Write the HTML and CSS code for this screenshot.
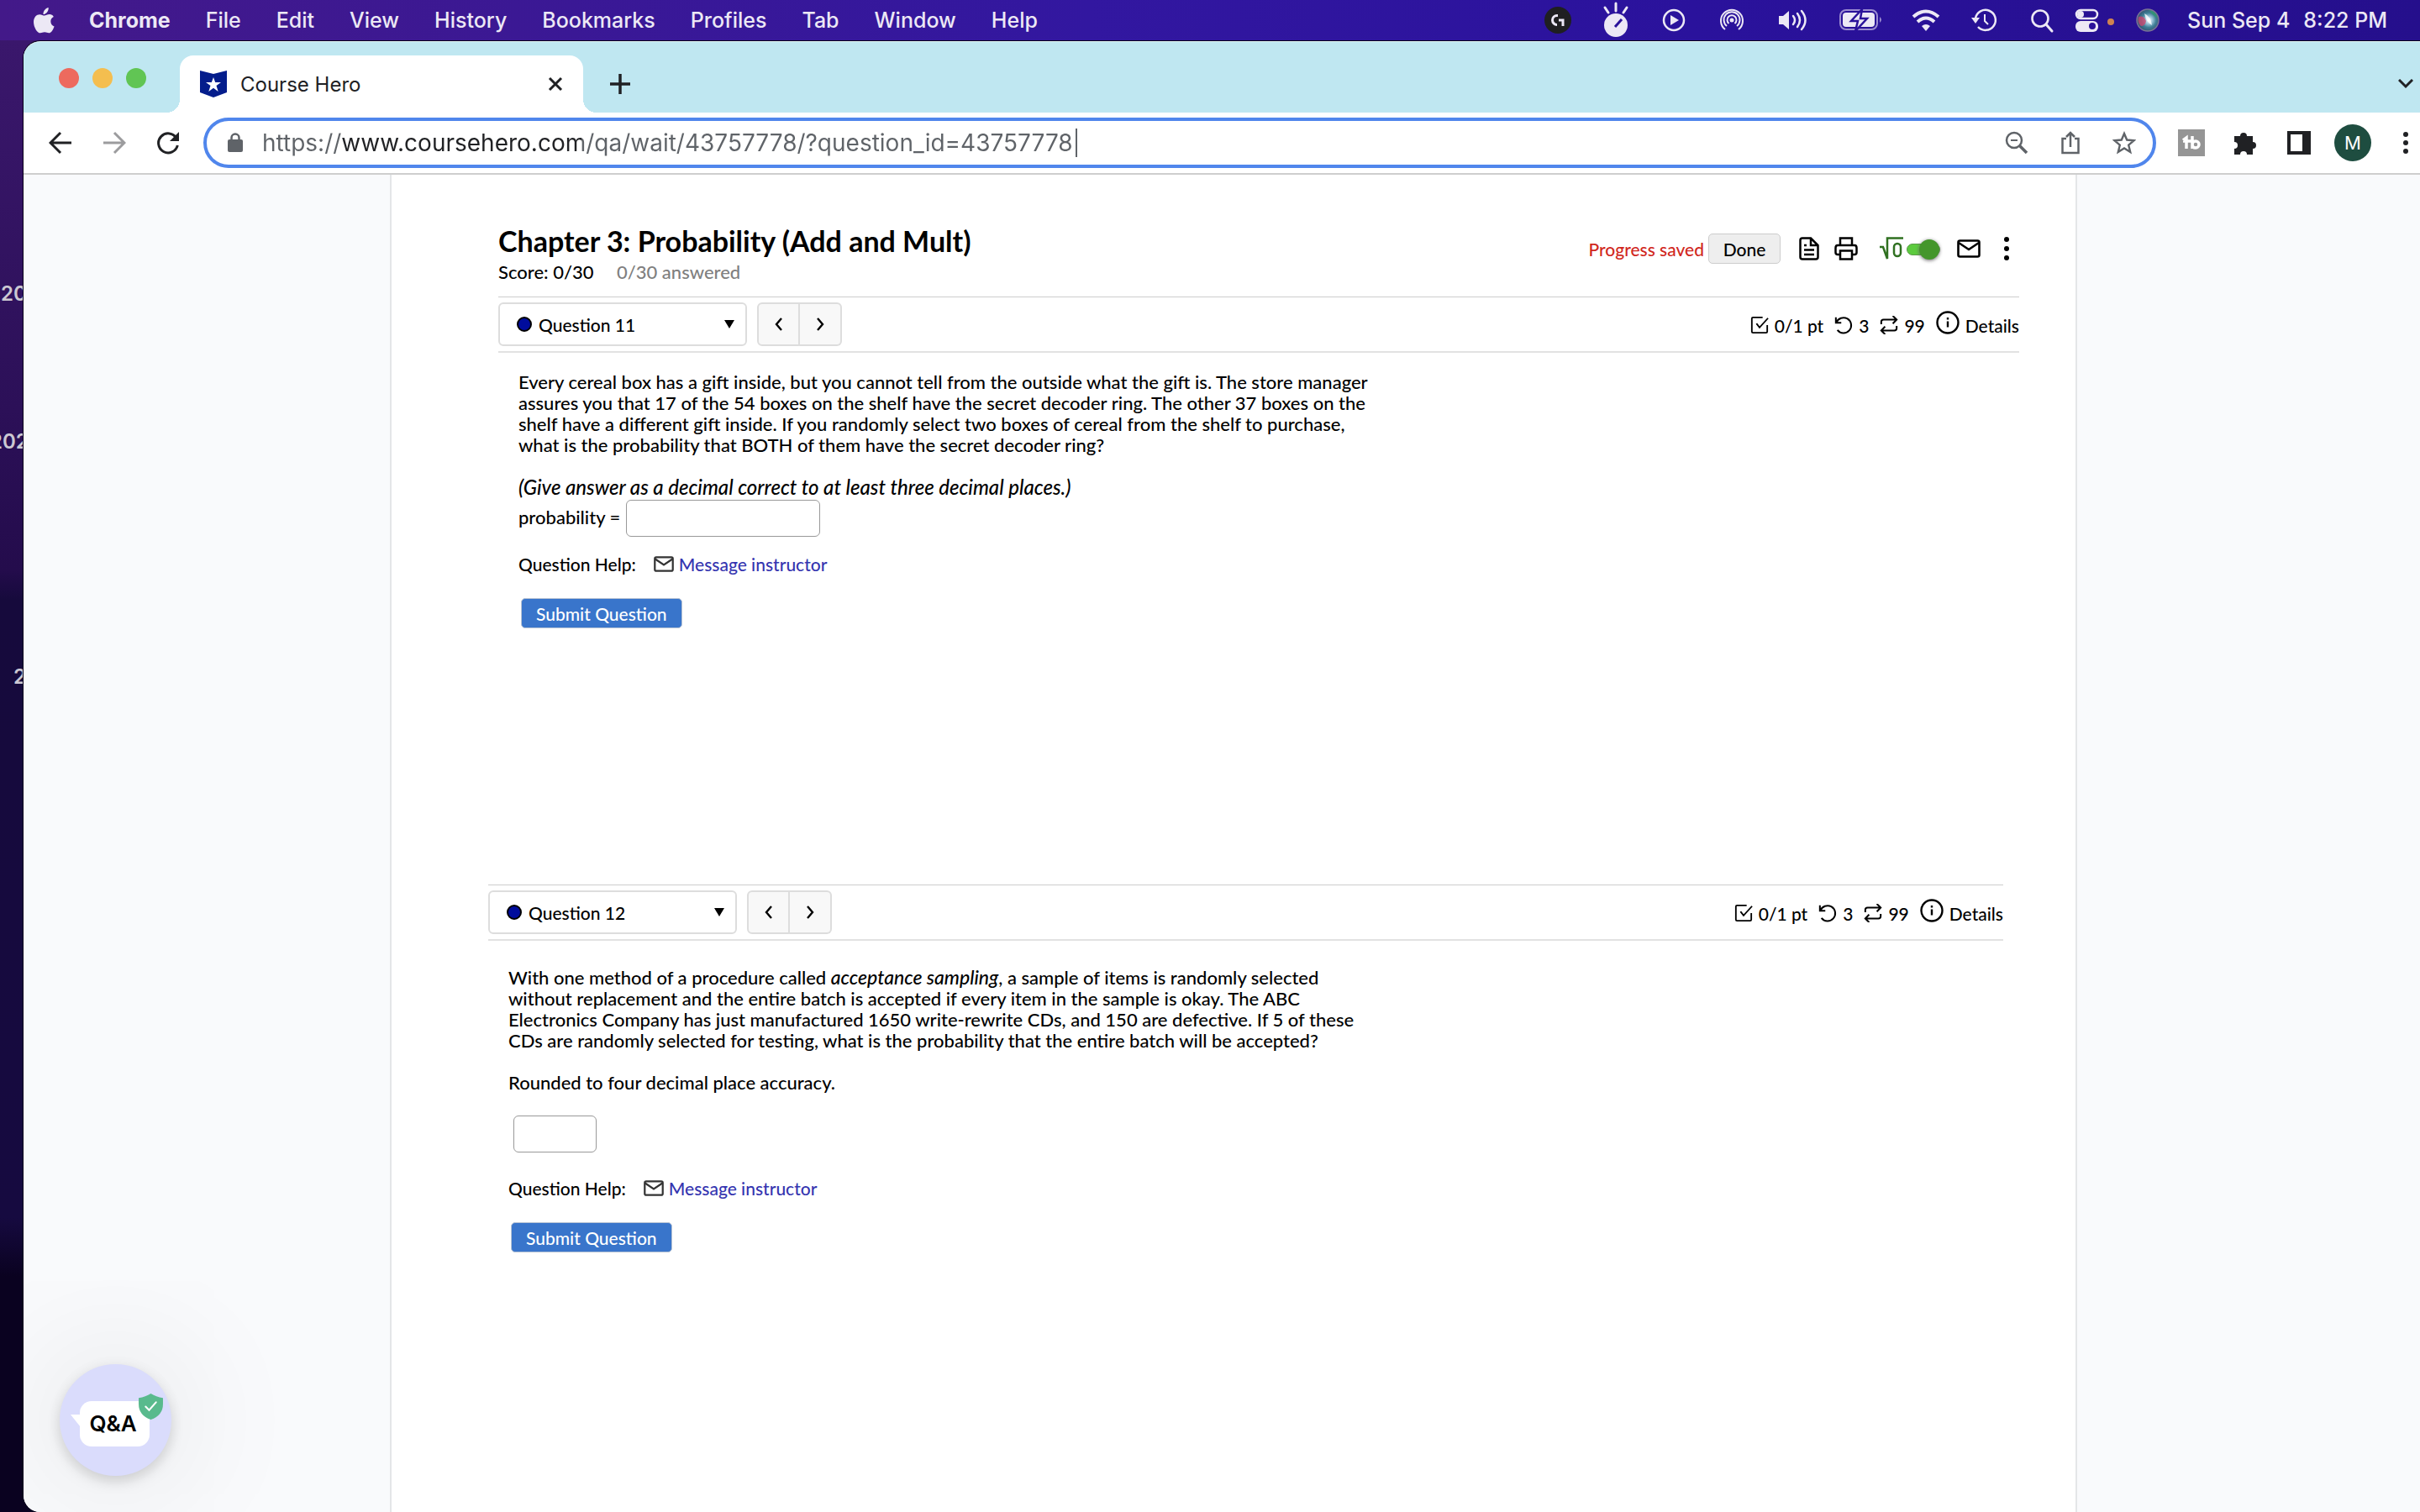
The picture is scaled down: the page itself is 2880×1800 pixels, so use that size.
FILE: index.html
```html
<!DOCTYPE html>
<html lang="en">
<head>
    <meta charset="UTF-8">
    <meta name="viewport" content="width=device-width, initial-scale=1.0">
    <title>Course Hero</title>
    <link rel="stylesheet" href="styles.css">
</head>
<body>

    <!-- Icons used more than once -->
    <svg class="sprite" aria-hidden="true">
        <symbol id="mail" viewBox="0 0 28 22">
            <rect x="1.5" y="1.5" width="25" height="19" rx="2" fill="none" stroke="currentColor" stroke-width="2.6"/>
            <path d="M2 4l12 8 12-8" fill="none" stroke="currentColor" stroke-width="2.6"/>
        </symbol>
        <symbol id="check" viewBox="0 0 24 24">
            <path d="M16 2H3.500Q2 2 2 3.500V20.500Q2 22 3.500 22H20.500Q22 22 22 20.500V12" fill="none" stroke="currentColor" stroke-width="2"/>
            <path d="M8 10l4 5L23 3" fill="none" stroke="currentColor" stroke-width="2"/>
        </symbol>
        <symbol id="undo" viewBox="0 0 24 24">
            <path d="M2 2v7h7M2.500 9A10 10 0 1 1 4 18.500" fill="none" stroke="currentColor" stroke-width="2.2"/>
        </symbol>
        <symbol id="repeat" viewBox="0 0 24 24">
            <path d="M17 0l5 5-5 5M2 11V8q0-3 3-3h17M7 24l-5-5 5-5M22 13v3q0 3-3 3H2" fill="none" stroke="currentColor" stroke-width="2.2"/>
        </symbol>
        <symbol id="info" viewBox="0 0 28 28">
            <circle cx="14" cy="14" r="12.500" fill="none" stroke="currentColor" stroke-width="2.4"/>
            <path d="M14 12.500v7M14 8v2.600" stroke="currentColor" stroke-width="2.4"/>
        </symbol>
        <symbol id="caret" viewBox="0 0 12 12"><path d="M0 1h12L6 11z"/></symbol>
        <symbol id="prev" viewBox="0 0 10 16"><path d="M8 1L2 8l6 7" fill="none" stroke="currentColor" stroke-width="2.4"/></symbol>
        <symbol id="next" viewBox="0 0 10 16"><path d="M2 1l6 7-6 7" fill="none" stroke="currentColor" stroke-width="2.4"/></symbol>
    </svg>

    <header class="menubar">
        <svg class="apple" viewBox="0 0 26 32"><path d="M18 1c.3 2.300-.6 4.300-1.900 5.700C14.800 8.100 13 8.900 12 8.700c-.2-2 .8-4.200 2-5.400C15.200 2 16.800 1.200 18 1zM24 11.600c-2.300 1.300-3.400 3-3.400 5.300 0 2.700 1.500 4.800 4.100 5.800-.8 2.600-3.300 7.700-6.200 7.700-1.800 0-2.500-1-4.900-1s-3.200 1-4.900 1C5 30.400.9 23.500.9 17.600c0-5.500 3.400-8.700 7-8.700 2.200 0 4 1.300 5.500 1.300 1.400 0 3.300-1.400 6-1.400 1.800 0 3.500.9 4.600 2.800z" fill="currentColor"/></svg>
        <nav class="menus">
            <b>Chrome</b>
            <span>File</span>
            <span>Edit</span>
            <span>View</span>
            <span>History</span>
            <span>Bookmarks</span>
            <span>Profiles</span>
            <span>Tab</span>
            <span>Window</span>
            <span>Help</span>
        </nav>
        <div class="status">
            <svg class="status-icon" viewBox="0 0 36 36"><circle cx="18" cy="18" r="16" fill="#1f1f21"/><path d="M18 12.500h-1a5.500 5.500 0 0 0 0 11M19 18h5v7" fill="none" stroke="currentColor" stroke-width="3"/></svg>
            <svg class="status-icon tall" viewBox="0 0 36 44"><circle cx="18" cy="28" r="14" fill="currentColor"/><path d="M18 2v9M5 7l4 6M31 7l-4 6" stroke="currentColor" stroke-width="3" stroke-linecap="round"/><path d="M17 30l8-9" stroke="#2a129a" stroke-width="3"/></svg>
            <svg class="status-icon" viewBox="0 0 36 36"><circle cx="18" cy="18" r="12" fill="none" stroke="currentColor" stroke-width="2.500"/><path d="M14 12l10 6-10 6z" fill="currentColor"/></svg>
            <svg class="status-icon" viewBox="0 0 36 36"><g fill="none" stroke="currentColor" stroke-width="2"><path d="M10 29a13 13 0 1 1 16 0M12 25a9.500 9.500 0 1 1 12 0M14.500 22a5.500 5.500 0 1 1 7 0"/></g><circle cx="18" cy="18" r="2.500" fill="currentColor"/></svg>
            <svg class="status-icon wide" viewBox="0 0 44 36"><path d="M5 13h5l7-6v22l-7-6H5z" fill="currentColor"/><path d="M22 13q4 5 0 10M27 10q6 8 0 16M32 7q9 11 0 22" fill="none" stroke="currentColor" stroke-width="2.500" stroke-linecap="round"/></svg>
            <svg class="battery" viewBox="0 0 52 28"><rect x="1" y="2" width="44" height="23" rx="7" fill="none" stroke="#9a8bd0" stroke-width="2"/><rect x="4" y="5" width="38" height="17" rx="4" fill="currentColor"/><path d="M48 10q4 3.500 0 7z" fill="#9a8bd0"/><path d="M27 1L14 15h8l-3 12 14-15h-8z" fill="currentColor" stroke="#2a129a" stroke-width="2.500"/></svg>
            <svg class="status-icon" viewBox="0 0 36 36"><path d="M3 14q15-13 30 0M8 20q10-9 20 0" fill="none" stroke="currentColor" stroke-width="4"/><path d="M13 25q5-4 10 0l-5 6z" fill="currentColor"/></svg>
            <svg class="status-icon" viewBox="0 0 36 36"><path d="M8 16A12 12 0 1 1 11 26" fill="none" stroke="currentColor" stroke-width="2.500"/><path d="M3 15h10l-5 7z" fill="currentColor"/><path d="M19 11v8l4 4" fill="none" stroke="currentColor" stroke-width="2"/></svg>
            <svg class="status-icon" viewBox="0 0 36 36"><circle cx="16" cy="16" r="9.500" fill="none" stroke="currentColor" stroke-width="2.600"/><path d="M23 23l7 8" stroke="currentColor" stroke-width="3" stroke-linecap="round"/></svg>
            <svg class="control-center" viewBox="0 0 48 30"><rect x="2" y="3" width="25" height="10" rx="5" fill="none" stroke="currentColor" stroke-width="2.500"/><circle cx="7" cy="8" r="4" fill="currentColor"/><rect x="1" y="16" width="27" height="13" rx="6" fill="currentColor"/><circle cx="21" cy="22" r="4" fill="#2a129a"/><circle cx="43" cy="17" r="4" fill="#cf8350"/></svg>
            <svg class="status-icon" viewBox="0 0 36 36">
                <defs><radialGradient id="siri" cx=".55" cy=".5" r=".55"><stop offset="0" stop-color="#fff"/><stop offset=".3" stop-color="#9cc4d8"/><stop offset=".6" stop-color="#3f7f96"/><stop offset="1" stop-color="#2f4f6c"/></radialGradient></defs>
                <circle cx="18" cy="18" r="13" fill="url(#siri)"/><path d="M7 14q6-2 9 5-1 6-6 6-5-4-3-11z" fill="#c8466e" opacity=".8"/><path d="M19 6q10 1 11 10-6-4-11-10z" fill="#2f9a70" opacity=".8"/><circle cx="18" cy="18" r="13" fill="none" stroke="#7a7396" stroke-width="1.500"/><path d="M14 10q8 4 9 14-7-4-9-14z" fill="#fff" opacity=".8"/>
            </svg>
            <time class="clock"><span>Sun Sep 4</span><span>8:22 PM</span></time>
        </div>
    </header>

    <div class="desktop">
        <span class="desk-label first">20</span>
        <span class="desk-label second">202</span>
        <span class="desk-label third">2</span>

        <div class="browser">
            <div class="tabstrip">
                <div class="lights"><i class="red"></i><i class="yellow"></i><i class="green"></i></div>
                <div class="tab">
                    <svg class="favicon" viewBox="0 0 32 32"><path d="M0 0l16 4L32 0v26l-16 6-16-6z" fill="#041d8c"/><path d="M16 8l2.200 6H25l-5.500 4 2.200 7-5.700-4.300L10.300 25l2.200-7L7 14h6.800z" fill="#fff"/></svg>
                    <span class="tab-title">Course Hero</span>
                    <button class="icon-btn" aria-label="Close tab"><svg width="18" height="18" viewBox="0 0 18 18"><path d="M2 2l14 14M16 2L2 16" stroke="currentColor" stroke-width="3"/></svg></button>
                </div>
                <button class="icon-btn new-tab" aria-label="New tab"><svg width="24" height="24" viewBox="0 0 24 24"><path d="M12 0v24M0 12h24" stroke="currentColor" stroke-width="3.500"/></svg></button>
                <button class="icon-btn tab-search" aria-label="Search tabs"><svg width="18" height="12" viewBox="0 0 18 12"><path d="M1 1l8 8 8-8" fill="none" stroke="currentColor" stroke-width="3"/></svg></button>
            </div>

            <div class="toolbar">
                <div class="nav">
                    <button class="icon-btn" aria-label="Back"><svg width="28" height="28" viewBox="0 0 28 28"><path d="M27 14H3M14 2L2 14l12 12" fill="none" stroke="currentColor" stroke-width="3"/></svg></button>
                    <button class="icon-btn" aria-label="Forward" disabled><svg width="28" height="28" viewBox="0 0 28 28"><path d="M1 14h24M14 2l12 12-12 12" fill="none" stroke="currentColor" stroke-width="3"/></svg></button>
                    <button class="icon-btn" aria-label="Reload"><svg width="28" height="28" viewBox="0 0 28 28"><path d="M24 8.500A11.500 11.500 0 1 0 25.300 17" fill="none" stroke="currentColor" stroke-width="3"/><path d="M27 1v11H16z" fill="currentColor"/></svg></button>
                </div>
                <div class="omnibox">
                    <svg class="lock" viewBox="0 0 18 24"><rect x="0" y="8" width="18" height="15" rx="2" fill="currentColor"/><path d="M4.500 9V6a4.500 4.500 0 0 1 9 0v3" fill="none" stroke="currentColor" stroke-width="2.500"/></svg>
                    <input class="url" type="text" aria-label="Address" value="https://www.coursehero.com/qa/wait/43757778/?question_id=43757778">
                    <i class="text-caret"></i>
                    <div class="omni-actions">
                        <button class="icon-btn" aria-label="Zoom"><svg width="28" height="28" viewBox="0 0 28 28"><circle cx="11" cy="11" r="9" fill="none" stroke="currentColor" stroke-width="2.500"/><path d="M17.500 17.500L26 26" stroke="currentColor" stroke-width="3.500"/><path d="M7 11h8" stroke="currentColor" stroke-width="2.200"/></svg></button>
                        <button class="icon-btn" aria-label="Share"><svg width="28" height="28" viewBox="0 0 28 28"><path d="M9 9H4.500v17h19V9H19M14 19V2M9 7l5-5 5 5" fill="none" stroke="currentColor" stroke-width="2.500"/></svg></button>
                        <button class="icon-btn" aria-label="Bookmark"><svg width="28" height="28" viewBox="0 0 28 28"><path d="M14 3l3.200 7.500 8.300.8-6.300 5.400 2 8.300-7.200-4.500L6.800 25l2-8.300-6.300-5.400 8.300-.8z" fill="none" stroke="currentColor" stroke-width="2.400"/></svg></button>
                    </div>
                </div>
                <div class="extensions">
                    <button class="icon-btn" aria-label="Extension"><svg width="32" height="32" viewBox="0 0 32 32"><rect width="32" height="32" fill="#959595"/><path d="M6 13l4-3v13M6 14h10M17 8v15M17 18a4 4 0 1 1 4 4q-4 0-4-4" fill="none" stroke="#fff" stroke-width="3.500"/></svg></button>
                    <button class="icon-btn" aria-label="Extensions"><svg width="30" height="30" viewBox="0 0 30 30"><path d="M2 7h7a4 4 0 1 1 8 0h7v7a4 4 0 1 1 0 8v7h-7a4 4 0 0 0-8 0H2v-7a4 4 0 0 0 0-8z" fill="currentColor"/></svg></button>
                    <button class="icon-btn" aria-label="Side panel"><svg width="28" height="28" viewBox="0 0 28 28"><path d="M2 2h24v24H2z" fill="none" stroke="currentColor" stroke-width="4"/><path d="M18 0h10v28H18z" fill="currentColor"/></svg></button>
                    <button class="avatar">M</button>
                    <button class="icon-btn more" aria-label="Menu"><svg width="8" height="26" viewBox="0 0 8 26"><g fill="currentColor"><circle cx="4" cy="3" r="3"/><circle cx="4" cy="13" r="3"/><circle cx="4" cy="23" r="3"/></g></svg></button>
                </div>
            </div>

            <div class="page">
                <main class="sheet">
                    <section class="assessment">
                        <div class="title-row">
                            <div>
                                <h1>Chapter 3: Probability (Add and Mult)</h1>
                                <p class="score">Score: 0/30 <span>0/30 answered</span></p>
                            </div>
                            <div class="tools">
                                <span class="saved">Progress saved</span>
                                <button class="done">Done</button>
                                <svg class="doc-icon" width="24" height="28" viewBox="0 0 24 28"><path d="M14 1.500H4Q1.500 1.500 1.500 4v20Q1.500 26.500 4 26.500h16q2.500 0 2.500-2.500V10zv8.500h8M6 10h3M6 15.500h12M6 21h12" fill="none" stroke="currentColor" stroke-width="2.500"/></svg>
                                <svg class="print-icon" width="28" height="28" viewBox="0 0 28 28"><path d="M7 10V1.500h14V10M7 21H4q-2.500 0-2.500-2.500V13q0-3 2.500-3h20q2.500 0 2.500 3v5.500Q26.500 21 24 21h-3M7 16.500h14v10H7z" fill="none" stroke="currentColor" stroke-width="2.500"/></svg>
                                <label class="math-toggle">
                                    <svg width="28" height="28" viewBox="0 0 28 28"><path d="M0 12h4l5 14V1.500h19" fill="none" stroke="#2f7020" stroke-width="2.500"/><rect x="17" y="8" width="8" height="15" rx="4" fill="none" stroke="#2f7020" stroke-width="2.500"/></svg>
                                    <input type="checkbox" aria-label="Math display" checked>
                                </label>
                                <svg class="mail-icon" width="28" height="22"><use href="#mail"/></svg>
                                <svg width="6" height="28" viewBox="0 0 6 28"><circle cx="3" cy="3" r="3"/><circle cx="3" cy="14" r="3"/><circle cx="3" cy="25" r="3"/></svg>
                            </div>
                        </div>

                        <div class="question-bar">
                            <label class="picker">
                                <i class="dot"></i>
                                <select aria-label="Question"><option>Question 11</option></select>
                                <svg width="12" height="12"><use href="#caret"/></svg>
                            </label>
                            <div class="pager">
                                <button aria-label="Previous question"><svg width="10" height="16"><use href="#prev"/></svg></button>
                                <button aria-label="Next question"><svg width="10" height="16"><use href="#next"/></svg></button>
                            </div>
                            <div class="points">
                                <span><svg width="22" height="22"><use href="#check"/></svg>0/1 pt</span>
                                <span><svg width="22" height="22"><use href="#undo"/></svg>3</span>
                                <span><svg width="22" height="22"><use href="#repeat"/></svg>99</span>
                                <span><svg class="info" width="28" height="28"><use href="#info"/></svg>Details</span>
                            </div>
                        </div>

                        <div class="question">
                            <p>Every cereal box has a gift inside, but you cannot tell from the outside what the gift is. The store manager<br>
                            assures you that 17 of the 54 boxes on the shelf have the secret decoder ring. The other 37 boxes on the<br>
                            shelf have a different gift inside. If you randomly select two boxes of cereal from the shelf to purchase,<br>
                            what is the probability that BOTH of them have the secret decoder ring?</p>
                            <p class="note">(Give answer as a decimal correct to at least three decimal places.)</p>
                            <div class="answer">
                                <label for="answer11">probability =</label>
                                <input id="answer11" type="text">
                            </div>
                            <div class="help">Question Help: <a href="#"><svg width="24" height="19"><use href="#mail"/></svg>Message instructor</a></div>
                            <button class="submit">Submit Question</button>
                        </div>
                    </section>

                    <section class="assessment second-question">
                        <div class="question-bar">
                            <label class="picker">
                                <i class="dot"></i>
                                <select aria-label="Question"><option>Question 12</option></select>
                                <svg width="12" height="12"><use href="#caret"/></svg>
                            </label>
                            <div class="pager">
                                <button aria-label="Previous question"><svg width="10" height="16"><use href="#prev"/></svg></button>
                                <button aria-label="Next question"><svg width="10" height="16"><use href="#next"/></svg></button>
                            </div>
                            <div class="points">
                                <span><svg width="22" height="22"><use href="#check"/></svg>0/1 pt</span>
                                <span><svg width="22" height="22"><use href="#undo"/></svg>3</span>
                                <span><svg width="22" height="22"><use href="#repeat"/></svg>99</span>
                                <span><svg class="info" width="28" height="28"><use href="#info"/></svg>Details</span>
                            </div>
                        </div>

                        <div class="question">
                            <p>With one method of a procedure called <em>acceptance sampling</em>, a sample of items is randomly selected<br>
                            without replacement and the entire batch is accepted if every item in the sample is okay. The ABC<br>
                            Electronics Company has just manufactured 1650 write-rewrite CDs, and 150 are defective. If 5 of these<br>
                            CDs are randomly selected for testing, what is the probability that the entire batch will be accepted?</p>
                            <p>Rounded to four decimal place accuracy.</p>
                            <div class="answer"><input id="answer12" type="text" aria-label="Answer"></div>
                            <div class="help">Question Help: <a href="#"><svg width="24" height="19"><use href="#mail"/></svg>Message instructor</a></div>
                            <button class="submit">Submit Question</button>
                        </div>
                    </section>
                </main>

                <button class="qa-chat">
                    <span class="bubble">Q&amp;A</span>
                    <svg class="shield" viewBox="0 0 28 30"><path d="M14 0q6 4 14 5v7q0 13-14 18Q0 25 0 12V5q8-1 14-5z" fill="#59ba8d"/><path d="M8 15l4 4 8-9" fill="none" stroke="#fff" stroke-width="2" stroke-linecap="round"/></svg>
                </button>
            </div>
        </div>
    </div>

</body>
</html>
```
FILE: styles.css
```css
* {
    box-sizing: border-box;
}

body {
    margin: 0;
    height: 100vh;
    overflow: hidden;
    display: flex;
    flex-direction: column;
    font-family: Inter, "Liberation Sans", sans-serif;
    color: #202124;
}

p, h1 {
    margin: 0;
}

button, input, select {
    font: inherit;
    color: inherit;
}

svg {
    flex: none;
}

.sprite {
    position: absolute;
    width: 0;
    height: 0;
}

/* Menu bar */
.menubar {
    flex: none;
    height: 48px;
    display: flex;
    align-items: center;
    padding: 0 39px;
    background: linear-gradient(90deg, #431989, #3217a0 45%, #2a129c 70%, #250f8c);
    color: #ece8f5;
    font-size: 25px;
    font-weight: 500;
    white-space: nowrap;
}

.apple {
    width: 27px;
    height: 33px;
    margin-right: 40px;
}

.menus {
    display: flex;
    gap: 42px;
}

.menus b {
    font-weight: 700;
}

.status {
    margin-left: auto;
    display: flex;
    align-items: center;
    gap: 33px;
}

.status-icon {
    width: 36px;
    height: 36px;
}

.status-icon.tall {
    height: 44px;
}

.status-icon.wide {
    width: 44px;
}

.battery {
    width: 52px;
    height: 28px;
}

.control-center {
    width: 48px;
    height: 30px;
    margin: 0 -12px;
}

.clock {
    display: flex;
    gap: 16px;
    margin-left: -4px;
}

/* Desktop behind the window */
.desktop {
    flex: 1;
    min-height: 0;
    position: relative;
    display: flex;
    padding: 1px 0 0 28px;
    background: linear-gradient(#3a176c, #2c1058 25%, #240c4c 36%, #160a3c 38%, #160a40 80%, #0a0220 84%);
}

.desk-label {
    position: absolute;
    color: #ccc8d2;
    font-size: 24px;
    font-weight: 600;
    line-height: 30px;
}

.first {
    left: 1px;
    top: 287px;
}

.second {
    left: -12px;
    top: 463px;
}

.third {
    left: 16px;
    top: 743px;
}

/* Browser window */
.browser {
    flex: 1;
    min-width: 0;
    position: relative;
    display: flex;
    flex-direction: column;
    overflow: hidden;
    border-top: 1px solid #dff3f7;
    border-radius: 20px 0 0 20px;
    background: #fff;
    box-shadow: 0 0 0 1px #080018;
}

.icon-btn {
    display: flex;
    justify-content: center;
    padding: 0;
    border: 0;
    background: none;
}

.tabstrip {
    flex: none;
    height: 84px;
    display: flex;
    align-items: flex-end;
    padding: 0 8px 0 42px;
    background: #bfe7f1;
}

.lights {
    display: flex;
    gap: 16px;
    margin-bottom: 29px;
}

.lights i {
    width: 24px;
    height: 24px;
    border-radius: 50%;
}

.red {
    background: #ed6a5e;
}

.yellow {
    background: #f4be4f;
}

.green {
    background: #61c554;
}

.tab {
    position: relative;
    width: 480px;
    height: 68px;
    margin-left: 40px;
    padding: 0 24px;
    display: flex;
    align-items: center;
    background: #fff;
    border-radius: 16px 16px 0 0;
}

/* Flared feet on both sides of the tab */
.tab::before, .tab::after {
    content: "";
    position: absolute;
    bottom: 0;
    width: 16px;
    height: 16px;
}

.tab::before {
    right: 100%;
    background: radial-gradient(circle at 0 0, transparent 16px, #fff 16px);
}

.tab::after {
    left: 100%;
    background: radial-gradient(circle at 100% 0, transparent 16px, #fff 16px);
}

.favicon {
    width: 32px;
    height: 32px;
    margin-right: 16px;
}

.tab-title {
    flex: 1;
    font-size: 24px;
}

.new-tab {
    margin: 0 auto 22px 32px;
}

.tab-search {
    margin-bottom: 28px;
}

.toolbar {
    flex: none;
    height: 74px;
    display: flex;
    align-items: center;
    padding-left: 30px;
    border-bottom: 2px solid #cecece;
}

.nav {
    display: flex;
    gap: 36px;
}

.nav button:disabled {
    color: #9c9c9e;
}

.omnibox {
    flex: 1;
    min-width: 0;
    height: 60px;
    margin: 0 10px 0 28px;
    padding: 0 20px 0 25px;
    display: flex;
    align-items: center;
    border: 4px solid #5086ec;
    border-radius: 30px;
    color: #5f6368;
}

.lock {
    width: 18px;
    height: 24px;
    margin-right: 23px;
}

/* The host name is darker than the rest of the address */
.url {
    width: 968px;
    padding: 0;
    border: 0;
    outline: none;
    font-size: 28px;
    color: transparent;
    background: linear-gradient(90deg, #5f6368 94px, #202124 94px, #202124 380px, #5f6368 380px);
    -webkit-background-clip: text;
    background-clip: text;
}

.text-caret {
    width: 2px;
    height: 34px;
    background: #5f6368;
}

.omni-actions {
    margin-left: auto;
    display: flex;
    gap: 36px;
}

.extensions {
    display: flex;
    align-items: center;
}

.extensions .icon-btn {
    width: 64px;
}

.extensions .more {
    width: 8px;
    margin: 0 13px 0 27px;
}

.avatar {
    width: 44px;
    height: 44px;
    margin: 0 10px;
    padding: 0;
    border: 0;
    border-radius: 50%;
    background: #1e4d40;
    color: #fff;
    font-size: 22px;
}

/* Page */
.page {
    flex: 1;
    min-height: 0;
    position: relative;
    padding: 0 408px 0 436px;
    background: #f9fafc;
}

.sheet {
    height: 100%;
    padding-top: 59px;
    border: solid #e4e6e8;
    border-width: 0 2px;
    background: #fff;
    color: #000;
    font-family: Lato, "Open Sans", sans-serif;
    font-size: 22px;
    font-weight: 500;
    line-height: 25px;
}

.assessment {
    padding: 0 67px 0 127px;
}

.title-row {
    display: flex;
    justify-content: space-between;
    padding-bottom: 17px;
}

h1 {
    font-size: 34px;
    line-height: 40px;
    margin-bottom: 4px;
}

.score span {
    margin-left: 22px;
    color: #808080;
}

.tools {
    height: 36px;
    margin: 11px 12px 0 0;
    display: flex;
    align-items: center;
    font-size: 21px;
}

.saved {
    color: #d1281e;
}

.done {
    width: 86px;
    height: 36px;
    margin: 0 22px 0 5px;
    padding: 0;
    border: 1px solid #ccc;
    border-radius: 5px;
    background: #eee;
}

.doc-icon {
    margin-right: 18px;
}

.print-icon {
    margin-right: 26px;
}

.math-toggle {
    display: flex;
    align-items: center;
    gap: 4px;
}

.math-toggle input {
    appearance: none;
    width: 40px;
    height: 14px;
    margin: 2px 20px 0 0;
    display: flex;
    align-items: center;
    justify-content: flex-end;
    border: 1px solid #5c9a4a;
    border-radius: 7px;
    background: #5ccb3e;
}

.math-toggle input::before {
    content: "";
    width: 24px;
    height: 24px;
    border-radius: 50%;
    background: #44962b;
    box-shadow: 0 1px 4px #666;
}

.mail-icon {
    margin-right: 28px;
}

.question-bar {
    display: flex;
    align-items: center;
    padding: 6px 0;
    border-top: 1px solid #ccc;
    border-bottom: 2px solid #e2e2e2;
    font-size: 21px;
}

.picker {
    width: 296px;
    height: 52px;
    margin-right: 12px;
    padding: 0 13px 0 20px;
    display: flex;
    align-items: center;
    border: 2px solid #ddd;
    border-radius: 6px;
}

.dot {
    width: 18px;
    height: 18px;
    margin-right: 8px;
    border: 2px solid #000;
    border-radius: 50%;
    background: #000c9c;
}

.picker select {
    flex: 1;
    appearance: none;
    padding: 0;
    border: 0;
    background: none;
}

.pager {
    display: flex;
}

.pager button {
    width: 51px;
    height: 52px;
    display: flex;
    align-items: center;
    justify-content: center;
    padding: 0;
    border: 2px solid #ddd;
    border-radius: 6px 0 0 6px;
    background: #f8f8f8;
}

.pager button + button {
    width: 50px;
    border-left: 0;
    border-radius: 0 6px 6px 0;
}

.points {
    margin-left: auto;
    padding-top: 2px;
    display: flex;
    gap: 13px;
}

.points span {
    display: flex;
    align-items: center;
    gap: 7px;
}

.points .info {
    margin-bottom: 6px;
}

.question {
    padding: 22px 24px 0;
}

.question p + p {
    margin-top: 25px;
}

.question em {
    font-size: 23px;
    line-height: 22px;
}

.question .note {
    font-size: 24px;
    font-style: italic;
}

.answer {
    display: flex;
    align-items: center;
    gap: 7px;
    margin-top: 3px;
}

.answer label {
    padding-bottom: 4px;
}

.answer input {
    width: 231px;
    height: 44px;
    padding: 0 8px;
    border: 1px solid #999;
    border-radius: 6px;
    background: #fff;
}

.help {
    display: flex;
    gap: 21px;
    margin-top: 20px;
    font-size: 21px;
}

.help a {
    display: flex;
    align-items: center;
    gap: 6px;
    color: #3535b0;
    text-decoration: none;
}

.help svg {
    color: #333;
}

.submit {
    display: block;
    height: 36px;
    margin: 28px 0 0 3px;
    padding: 0 17px;
    border: 1px solid #b8c4d4;
    border-radius: 5px;
    background: #3975cb;
    color: #fff;
    font-size: 21px;
}

.second-question {
    margin-top: 305px;
    padding: 0 86px 0 115px;
}

.second-question .question {
    padding-top: 31px;
}

.second-question .answer {
    margin: 27px 0 30px 6px;
}

.second-question .answer input {
    width: 99px;
}

/* Chat button */
.qa-chat {
    position: absolute;
    left: 43px;
    bottom: 43px;
    width: 133px;
    height: 133px;
    padding: 0;
    border: 0;
    border-radius: 50%;
    background: #dadcfc;
    box-shadow: 0 6px 16px rgba(0, 0, 0, 0.16), 0 0 160px 10px rgba(0, 0, 0, 0.1);
}

.bubble {
    position: absolute;
    left: 24px;
    top: 44px;
    width: 83px;
    height: 54px;
    padding-right: 4px;
    border-radius: 14px;
    background: #fff;
    color: #000;
    font-size: 26px;
    font-weight: 600;
    line-height: 54px;
}

/* Speech tail */
.bubble::before {
    content: "";
    position: absolute;
    left: -11px;
    top: 16px;
    width: 12px;
    height: 15px;
    background: #fff;
    clip-path: polygon(0 0, 100% 0, 100% 100%);
}

.shield {
    position: absolute;
    left: 94px;
    top: 35px;
    width: 29px;
    height: 31px;
}
```
